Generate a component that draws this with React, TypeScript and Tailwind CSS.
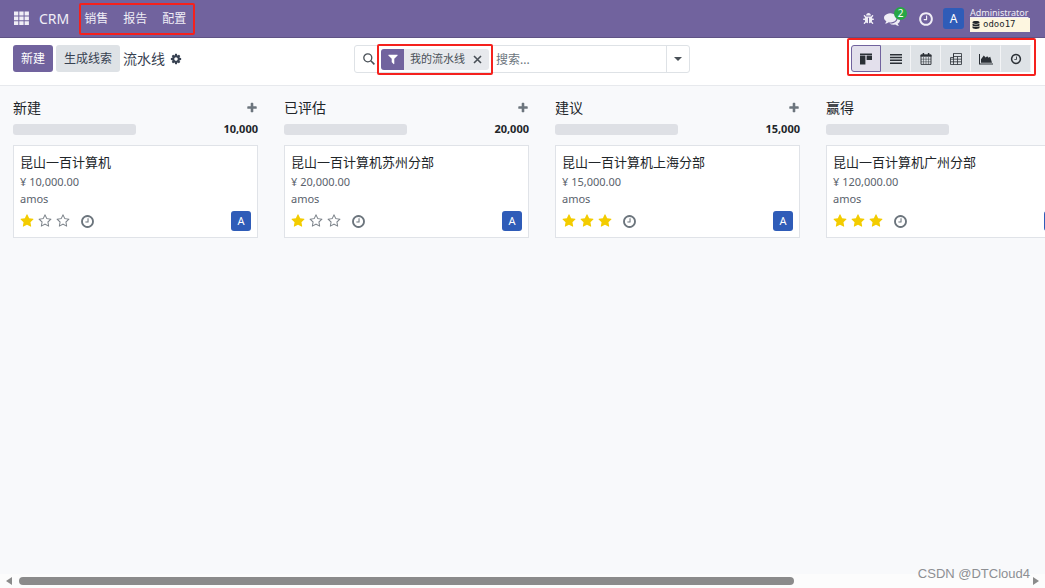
import { useState, type ReactNode } from 'react';
import { FaBug, FaDatabase } from 'react-icons/fa';

const CLOCK =
  'M1024 544v448q0 14-9 23t-23 9h-320q-14 0-23-9t-9-23v-64q0-14 9-23t23-9h224v-352q0-14 9-23t23-9h64q14 0 23 9t9 23zm416 352q0-148-73-273t-198-198-273-73-273 73-198 198-73 273 73 273 198 198 273 73 273-73 198-198 73-273zm224 0q0 209-103 385.5t-279.5 279.5-385.5 103-385.5-103-279.5-279.5-103-385.5 103-385.5 279.5-279.5 385.5-103 385.5 103 279.5 279.5 103 385.5z';
const COG =
  'M1152 896q0-106-75-181t-181-75-181 75-75 181 75 181 181 75 181-75 75-181zm512-109v222q0 12-8 23t-20 13l-185 28q-19 54-39 91 35 50 107 138 10 12 10 25t-9 23q-27 37-99 108t-94 71q-12 0-26-9l-138-108q-44 23-91 38-16 136-29 186-7 28-36 28h-222q-14 0-24.5-8.5t-11.5-21.5l-28-184q-49-16-90-37l-141 107q-10 9-25 9-14 0-25-11-126-114-165-168-7-10-7-23 0-12 8-23 15-21 51-66.5t54-70.5q-27-50-41-99l-183-27q-13-2-21-12.5t-8-23.5v-222q0-12 8-23t19-13l186-28q14-46 39-92-40-57-107-138-10-12-10-24 0-10 9-23 26-36 98.5-107.5t94.5-71.5q13 0 26 10l138 107q44-23 91-38 16-136 29-186 7-28 36-28h222q14 0 24.5 8.5t11.5 21.5l28 184q49 16 90 37l142-107q9-9 24-9 13 0 25 10 129 119 165 170 7 8 7 22 0 12-8 23-15 21-51 66.5t-54 70.5q26 50 41 98l183 28q13 2 21 12.5t8 23.5z';
const PLUS =
  'M1600 736v192q0 40-28 68t-68 28h-416v416q0 40-28 68t-68 28h-192q-40 0-68-28t-28-68v-416h-416q-40 0-68-28t-28-68v-192q0-40 28-68t68-28h416v-416q0-40 28-68t68-28h192q40 0 68 28t28 68v416h416q40 0 68 28t28 68z';
const STAR =
  'M1728 647q0 22-26 48l-363 354 86 500q1 7 1 20 0 21-10.5 35.5t-30.5 14.5q-19 0-40-12l-449-236-449 236q-22 12-40 12-21 0-31.5-14.5t-10.5-35.5q0-6 2-20l86-500-364-354q-25-27-25-48 0-37 56-46l502-73 225-455q19-41 49-41t49 41l225 455 502 73q56 9 56 46z';
const STAR_O =
  'M1201 1004l306-297-422-62-189-382-189 382-422 62 306 297-73 421 378-199 377 199zm527-357q0 22-26 48l-363 354 86 500q1 7 1 20 0 50-41 50-19 0-40-12l-449-236-449 236q-22 12-40 12-21 0-31.5-14.5t-10.5-35.5q0-6 2-20l86-500-364-354q-25-27-25-48 0-37 56-46l502-73 225-455q19-41 49-41t49 41l225 455 502 73q56 9 56 46z';
const FILTER =
  'M1595 295q17 41-14 70l-493 493v742q0 42-39 59-13 5-25 5-27 0-45-19l-256-256q-19-19-19-45v-486l-493-493q-31-29-14-70 17-39 59-39h1280q42 0 59 39z';
const COMMENTS =
  'M1408 768q0 139-94 257t-256.5 186.5-353.5 68.5q-86 0-176-16-124 88-278 128-36 9-86 16h-3q-11 0-20.5-8t-11.5-21q-1-3-1-6.5t.5-6.5 2-6l2.5-5 3.5-5.5 4-5 4.5-5 4-4.5q5-6 23-25t26-29.5 22.5-29 25-38.5 20.5-44q-124-72-195-177t-71-224q0-139 94-257t256.5-186.5 353.5-68.5 353.5 68.5 256.5 186.5 94 257zm384 256q0 120-71 224.5t-195 176.5q10 24 20.5 44t25 38.5 22.5 29 26 29.5 23 25q1 1 4 4.5t4.5 5 4 5 3.5 5.5l2.5 5 2 6 .5 6.5-1 6.5q-3 14-13 22t-22 7q-50-7-86-16-154-40-278-128-90 16-176 16-271 0-472-132 58 4 88 4 161 0 309-45t264-129q125-92 192-212t67-254q0-77-23-152 129 71 204 178t75 230z';

function Glyph({ d, className }: { d: string; className: string }) {
  return (
    <svg viewBox="0 0 1792 1792" fill="currentColor" className={className} aria-hidden="true">
      <path d={d} />
    </svg>
  );
}

const views: { id: string; label: string; icon: ReactNode }[] = [
  {
    id: 'kanban',
    label: '看板',
    icon: (
      <svg viewBox="0 0 14 14" className="size-3.5" fill="currentColor">
        <path d="M1 1.5h12v1.4H1zM1 3.5h5.4v9H1zM7.6 3.5H13v4.6H7.6z" />
      </svg>
    ),
  },
  {
    id: 'list',
    label: '列表',
    icon: (
      <svg viewBox="0 0 14 14" className="size-3.5" fill="currentColor">
        <path d="M1 2h12v1.5H1zM1 4.8h12v1.5H1zM1 7.6h12v1.5H1zM1 10.4h12v1.5H1z" />
      </svg>
    ),
  },
  {
    id: 'calendar',
    label: '日历',
    icon: (
      <svg viewBox="0 0 14 14" className="size-3.5" fill="none" stroke="currentColor">
        <path d="M2 3h10v9.4H2z" strokeWidth=".9" />
        <path d="M1.6 2.6h10.8v2.1H1.6z" fill="currentColor" stroke="none" />
        <path d="M4.4 1v3M9.6 1v3" strokeWidth="1.5" />
        <path d="M2 7.2h10M2 9.8h10M4.5 5v7.4M7 5v7.4M9.5 5v7.4" strokeWidth=".5" />
      </svg>
    ),
  },
  {
    id: 'pivot',
    label: '透视表',
    icon: (
      <svg viewBox="0 0 14 14" className="size-3.5" fill="none" stroke="currentColor">
        <path d="M4.5 1.5h8v11h-11v-7h3zM4.5 1.5v11M8.5 4.5v8M4.5 4.5h8M1.5 7.2h11M1.5 9.8h11" strokeWidth=".8" />
      </svg>
    ),
  },
  {
    id: 'graph',
    label: '图表',
    icon: (
      <svg viewBox="0 0 14 12" className="h-3 w-3.5" fill="currentColor">
        <path d="M0 1h1v9.5h13v1H0zM2 9.7V6.2l2.8-3.6 1.8 2 1.6-1.4 1.4 1.6 1.6-1L13 9.7z" />
      </svg>
    ),
  },
  { id: 'activity', label: '活动', icon: <Glyph d={CLOCK} className="size-3" /> },
];

const columns = [
  { title: '新建', total: '10,000', card: { name: '昆山一百计算机', amount: '10,000.00', stars: 1 } },
  { title: '已评估', total: '20,000', card: { name: '昆山一百计算机苏州分部', amount: '20,000.00', stars: 1 } },
  { title: '建议', total: '15,000', card: { name: '昆山一百计算机上海分部', amount: '15,000.00', stars: 3 } },
  { title: '赢得', total: null, card: { name: '昆山一百计算机广州分部', amount: '120,000.00', stars: 3 } },
];

function Navbar() {
  return (
    <header className="flex h-[38px] items-center border-b border-[#5f5385] bg-[#71639e] pr-[15px] pl-[14px] text-[#f0eef6]">
      <button type="button" aria-label="应用" className="mr-[10px]">
        <svg viewBox="0 0 15 15" className="size-[15px]" fill="currentColor">
          <path d="M0 .6h4.3v3.8H0zM5.3.6h4.3v3.8H5.3zM10.6.6h4.3v3.8h-4.3zM0 5.4h4.3v3.8H0zM5.3 5.4h4.3v3.8H5.3zM10.6 5.4h4.3v3.8h-4.3zM0 10.2h4.3V14H0zM5.3 10.2h4.3V14H5.3zM10.6 10.2h4.3V14h-4.3z" />
        </svg>
      </button>
      <a href="#crm" className="text-sm">CRM</a>
      <nav className="ml-[10px] flex h-8 items-center gap-[15px] rounded-xs border-2 border-[#f5211d] px-[3px] pr-[7px] text-xs">
        <a href="#sales">销售</a>
        <a href="#reports">报告</a>
        <a href="#settings">配置</a>
      </nav>

      <div className="ml-auto flex items-center">
        <button type="button" aria-label="调试">
          <FaBug className="size-[11px]" />
        </button>
        <button type="button" aria-label="消息" className="relative ml-[10px]">
          <Glyph d={COMMENTS} className="size-4" />
          <span className="absolute -top-1 left-[10px] flex size-[13px] items-center justify-center rounded-full bg-[#28a745] text-[10px] leading-none text-white">
            2
          </span>
        </button>
        <button type="button" aria-label="活动" className="ml-[18px]">
          <Glyph d={CLOCK} className="size-4" />
        </button>
        <button type="button" className="ml-[9px] flex items-center gap-[6px] text-left">
          <span className="flex size-[21px] items-center justify-center rounded-[3px] bg-[#2f5cb8] text-xs text-white">A</span>
          <span className="flex w-[60px] flex-col pt-[1px]">
            <span className="text-[9px] leading-[11px] underline">Administrator</span>
            <span className="flex h-[14px] items-center gap-[3px] bg-[#fdf6e0] px-[2px] font-['DejaVu_Sans_Mono',monospace] text-[9px] text-[#212529]">
              <FaDatabase className="size-2" />
              odoo17
            </span>
          </span>
        </button>
      </div>
    </header>
  );
}

function ControlPanel() {
  const [active, setActive] = useState('kanban');
  const [query, setQuery] = useState('');

  return (
    <div className="grid h-12 grid-cols-[1fr_336px_1fr] items-start border-b border-[#e7e9ed] bg-white pr-[14px] pl-[13px] pt-[7px]">
      <div className="flex items-center">
        <button type="button" className="h-[27px] rounded-[3px] bg-[#71639e] px-2 text-xs text-white">新建</button>
        <button type="button" className="ml-[3px] h-[27px] rounded-[3px] bg-[#dee2e6] px-2 text-xs text-[#374151]">生成线索</button>
        <h1 className="ml-[3px] text-sm text-[#374151]">流水线</h1>
        <button type="button" aria-label="操作" className="ml-[5px] text-[#374151]">
          <Glyph d={COG} className="size-3" />
        </button>
      </div>

      <div className="flex h-7 items-center rounded-[3px] border border-[#dee2e6] text-xs text-[#495057]">
        <svg viewBox="0 0 12 12" className="ml-2 size-3 shrink-0" fill="none" stroke="currentColor" strokeWidth="1.3">
          <circle cx="4.8" cy="4.8" r="4" />
          <path d="M7.8 7.8l3.6 3.6" strokeWidth="1.6" />
        </svg>
        <div className="relative ml-[6px] flex h-[21px] shrink-0 items-center rounded-[3px] bg-[#e7e9ed] pr-[7px]">
          <span className="mr-[6px] flex h-full w-[23px] items-center justify-center rounded-l-[3px] bg-[#71639e] text-white">
            <Glyph d={FILTER} className="size-3" />
          </span>
          <span className="text-[11px]">我的流水线</span>
          <button type="button" aria-label="移除" className="ml-2">
            <svg viewBox="0 0 9 9" className="size-[9px]" fill="none" stroke="currentColor" strokeWidth="1.6">
              <path d="M1 1l7 7M8 1L1 8" />
            </svg>
          </button>
          <span className="pointer-events-none absolute -inset-x-1 -inset-y-[5px] rounded-xs border-2 border-[#f5211d]" />
        </div>
        <input
          type="text"
          aria-label="搜索"
          placeholder="搜索..."
          value={query}
          onChange={e => setQuery(e.target.value)}
          className="ml-[7px] h-full min-w-0 flex-1 bg-transparent placeholder:text-[#6c757d] focus:outline-none"
        />
        <button type="button" aria-label="搜索选项" className="flex h-full w-[23px] items-center justify-center border-l border-[#dee2e6]">
          <svg viewBox="0 0 8 4" className="h-1 w-2" fill="currentColor">
            <path d="M0 0h8L4 4z" />
          </svg>
        </button>
      </div>

      <div className="relative flex h-[27px] justify-self-end">
        {views.map(view => (
          <button
            key={view.id}
            type="button"
            aria-label={view.label}
            aria-pressed={active === view.id}
            onClick={() => setActive(view.id)}
            className={`flex w-[30px] items-center justify-center border text-[#2b3036] first:rounded-l-[3px] last:rounded-r-[3px] ${
              active === view.id ? 'border-[#71639e] bg-[#e3e0ec]' : 'border-y-[#dee2e6] border-r-[#f3f4f6] border-l-[#dee2e6] bg-[#dee2e6]'
            }`}
          >
            {view.icon}
          </button>
        ))}
        <span className="pointer-events-none absolute -top-[7px] -right-[5px] -bottom-1 -left-1 rounded-xs border-2 border-[#f5211d]" />
      </div>
    </div>
  );
}

function Card({ name, amount, stars }: { name: string; amount: string; stars: number }) {
  return (
    <article className="border border-[#e0e3e8] bg-white px-[6px] py-[6px] text-[11px] text-[#5a626c]">
      <h3 className="text-[13px] leading-5 text-[#212529]">{name}</h3>
      <p className="leading-5">¥ {amount}</p>
      <p className="leading-[14px]">amos</p>
      <div className="mt-[5px] flex items-center">
        <div className="flex gap-1" role="img" aria-label={`优先级 ${stars}`}>
          {[1, 2, 3].map(n => (
            <Glyph
              key={n}
              d={n <= stars ? STAR : STAR_O}
              className={n <= stars ? 'size-[14px] text-[#f3cc00]' : 'size-[14px] text-[#7c838a]'}
            />
          ))}
        </div>
        <button type="button" aria-label="活动" className="ml-[10px] text-[#6c757d]">
          <Glyph d={CLOCK} className="size-[15px]" />
        </button>
        <span className="ml-auto flex size-5 items-center justify-center rounded-[3px] bg-[#2f5cb8] text-[11px] text-white">A</span>
      </div>
    </article>
  );
}

export default function App() {
  return (
    <div className="relative flex min-h-screen flex-col overflow-hidden bg-[#f8f9fb] font-['Noto_Sans','Noto_Sans_CJK_SC',sans-serif]">
      <Navbar />
      <ControlPanel />

      <main className="flex flex-1 overflow-hidden">
        {columns.map(col => (
          <section key={col.title} className="w-[271px] shrink-0 px-[13px] pt-3">
            <div className="flex h-5 items-center justify-between">
              <h2 className="text-sm text-[#212529]">{col.title}</h2>
              <button type="button" aria-label="快速添加" className="text-[#6c757d]">
                <Glyph d={PLUS} className="size-3" />
              </button>
            </div>
            <div className="mt-[3px] mb-2 flex h-4 items-center justify-between">
              <div className="h-[11px] w-[123px] rounded-[3px] bg-[#dee0e5]" />
              {col.total && <span className="text-[11px] font-bold text-[#212529]">{col.total}</span>}
            </div>
            <Card {...col.card} />
          </section>
        ))}
      </main>

      {/* horizontal scrollbar */}
      <div className="flex h-[14px] items-center bg-[#fcfcfc] px-[6px] text-[#8b8b8b]">
        <svg viewBox="0 0 6 8" className="h-2 w-[6px]" fill="currentColor">
          <path d="M6 0v8L0 4z" />
        </svg>
        <div className="mx-[7px] flex-1">
          <div className="h-2 w-[77%] rounded-full bg-[#8b8b8b]" />
        </div>
        <svg viewBox="0 0 6 8" className="h-2 w-[6px]" fill="currentColor">
          <path d="M0 0v8l6-4z" />
        </svg>
      </div>

      <span className="absolute right-[15px] bottom-[5px] font-['Liberation_Sans',sans-serif] text-[13px] text-[#8d8f93]">
        CSDN @DTCloud4
      </span>
    </div>
  );
}
